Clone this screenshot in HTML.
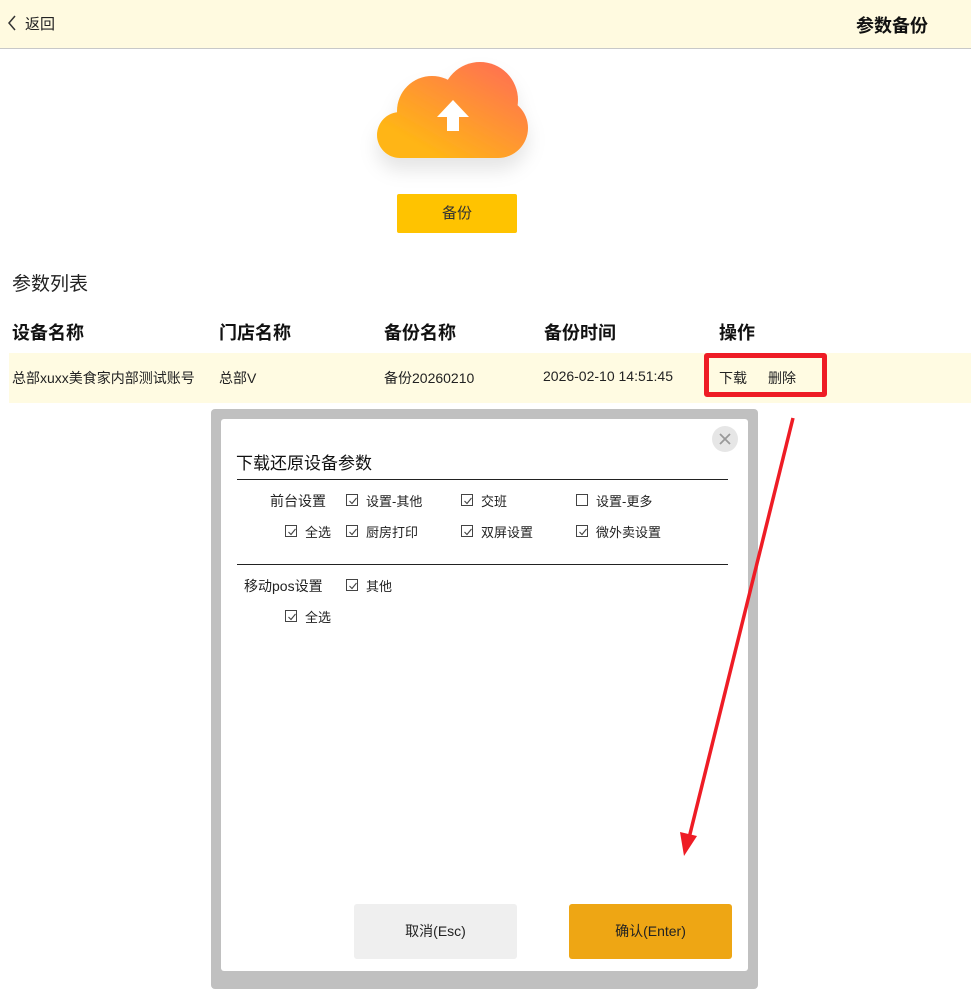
<!DOCTYPE html>
<html><head><meta charset="utf-8"><style>
*{margin:0;padding:0;box-sizing:border-box}
body{width:971px;height:980px;position:relative;overflow:hidden;background:#fff;font-family:"Liberation Sans","Noto Sans CJK SC",sans-serif;color:#222}
.a{position:absolute;white-space:nowrap}
.cb{position:absolute;width:12px;height:12px;border:1px solid #444;background:#fff}
.cb svg{position:absolute;left:1px;top:1px}
.t13{font-size:13px}
</style></head><body>
<div class="a" style="left:0;top:0;width:971px;height:49px;background:#fffae0;border-bottom:1px solid #c8c8c8"></div>
<svg class="a" style="left:6px;top:14px" width="12" height="18"><path d="M9 2 L3 9 L9 16" stroke="#333" stroke-width="1.5" fill="none"/></svg>
<div class="a" style="left:25px;top:13px;font-size:15px">返回</div>
<div class="a" style="left:856px;top:12px;font-size:18px;font-weight:bold;color:#111">参数备份</div>

<svg class="a" style="left:0;top:0" width="600" height="200">
<defs><linearGradient id="g" gradientUnits="userSpaceOnUse" x1="495" y1="62" x2="440" y2="158"><stop offset="0" stop-color="#ff7350"/><stop offset="1" stop-color="#ffb516"/></linearGradient>
<filter id="f" x="-30%" y="-30%" width="160%" height="180%"><feDropShadow dx="0" dy="12" stdDeviation="9" flood-color="#000" flood-opacity="0.1"/></filter></defs>
<g filter="url(#f)" fill="url(#g)">
<circle cx="400" cy="135" r="23"/>
<circle cx="432" cy="111" r="35"/>
<circle cx="480" cy="100" r="38"/>
<circle cx="498" cy="128" r="30"/>
<rect x="400" y="110" width="98" height="48"/>
</g>
<path d="M453 100 L437 117 L447 117 L447 131 L459 131 L459 117 L469 117 Z" fill="#fff"/>
</svg>
<div class="a" style="left:397px;top:194px;width:120px;height:39px;background:#ffc300;border-radius:2px;font-size:15px;text-align:center;line-height:39px;color:#333">备份</div>

<div class="a" style="left:12px;top:269px;font-size:19px">参数列表</div>
<div class="a" style="top:319px;left:12px;font-size:18px;font-weight:bold;color:#111">设备名称</div>
<div class="a" style="top:319px;left:219px;font-size:18px;font-weight:bold;color:#111">门店名称</div>
<div class="a" style="top:319px;left:384px;font-size:18px;font-weight:bold;color:#111">备份名称</div>
<div class="a" style="top:319px;left:544px;font-size:18px;font-weight:bold;color:#111">备份时间</div>
<div class="a" style="top:319px;left:719px;font-size:18px;font-weight:bold;color:#111">操作</div>
<div class="a" style="left:9px;top:353px;width:962px;height:50px;background:#fffbe2"></div>
<div class="a" style="top:368px;left:12px;font-size:14px">总部xuxx美食家内部测试账号</div>
<div class="a" style="top:368px;left:219px;font-size:14px">总部V</div>
<div class="a" style="top:368px;left:384px;font-size:14px">备份20260210</div>
<div class="a" style="top:368px;left:543px;font-size:14px">2026-02-10 14:51:45</div>
<div class="a" style="left:704px;top:353px;width:123px;height:44px;border:5px solid #ee1c25;border-radius:3px"></div>
<div class="a" style="top:368px;left:719px;font-size:14px">下载</div>
<div class="a" style="top:368px;left:768px;font-size:14px">删除</div>

<div class="a" style="left:211px;top:409px;width:547px;height:580px;background:#c0c0c0;border-radius:4px"></div>
<div class="a" style="left:221px;top:419px;width:527px;height:552px;background:#fff;border-radius:3px"></div>
<div class="a" style="left:712px;top:426px;width:26px;height:26px;border-radius:50%;background:#e6e6e6"></div>
<svg class="a" style="left:712px;top:426px" width="26" height="26"><path d="M8 8 L18 18 M18 8 L8 18" stroke="#999" stroke-width="1.8"/></svg>
<div class="a" style="left:236px;top:449px;font-size:17px;color:#111">下载还原设备参数</div>
<div class="a" style="left:237px;top:479px;width:491px;height:1px;background:#222"></div>
<div class="a" style="left:237px;top:564px;width:491px;height:1px;background:#222"></div>

<div class="a t13" style="left:270px;top:491px;font-size:14px">前台设置</div>
<div class="a t13" style="left:244px;top:576px;font-size:14px">移动pos设置</div>

<div class="cb" style="left:346px;top:494px"><svg width="10" height="10"><path d="M1.5 5 L4 7.5 L8.5 2" stroke="#444" fill="none" stroke-width="1.1"/></svg></div><div class="a t13" style="left:366px;top:491px">设置-其他</div>
<div class="cb" style="left:461px;top:494px"><svg width="10" height="10"><path d="M1.5 5 L4 7.5 L8.5 2" stroke="#444" fill="none" stroke-width="1.1"/></svg></div><div class="a t13" style="left:481px;top:491px">交班</div>
<div class="cb" style="left:576px;top:494px"></div><div class="a t13" style="left:596px;top:491px">设置-更多</div>

<div class="cb" style="left:285px;top:525px"><svg width="10" height="10"><path d="M1.5 5 L4 7.5 L8.5 2" stroke="#444" fill="none" stroke-width="1.1"/></svg></div><div class="a t13" style="left:305px;top:522px">全选</div>
<div class="cb" style="left:346px;top:525px"><svg width="10" height="10"><path d="M1.5 5 L4 7.5 L8.5 2" stroke="#444" fill="none" stroke-width="1.1"/></svg></div><div class="a t13" style="left:366px;top:522px">厨房打印</div>
<div class="cb" style="left:461px;top:525px"><svg width="10" height="10"><path d="M1.5 5 L4 7.5 L8.5 2" stroke="#444" fill="none" stroke-width="1.1"/></svg></div><div class="a t13" style="left:481px;top:522px">双屏设置</div>
<div class="cb" style="left:576px;top:525px"><svg width="10" height="10"><path d="M1.5 5 L4 7.5 L8.5 2" stroke="#444" fill="none" stroke-width="1.1"/></svg></div><div class="a t13" style="left:596px;top:522px">微外卖设置</div>

<div class="cb" style="left:346px;top:579px"><svg width="10" height="10"><path d="M1.5 5 L4 7.5 L8.5 2" stroke="#444" fill="none" stroke-width="1.1"/></svg></div><div class="a t13" style="left:366px;top:576px">其他</div>
<div class="cb" style="left:285px;top:610px"><svg width="10" height="10"><path d="M1.5 5 L4 7.5 L8.5 2" stroke="#444" fill="none" stroke-width="1.1"/></svg></div><div class="a t13" style="left:305px;top:607px">全选</div>

<div class="a" style="left:354px;top:904px;width:163px;height:55px;background:#efefef;border-radius:3px;font-size:14px;text-align:center;line-height:55px">取消(Esc)</div>
<div class="a" style="left:569px;top:904px;width:163px;height:55px;background:#eea614;border-radius:3px;font-size:14px;text-align:center;line-height:55px">确认(Enter)</div>

<svg class="a" style="left:0;top:0" width="971" height="980"><path d="M793 418 L689 838" stroke="#ee1c25" stroke-width="3.5" fill="none"/><path d="M680 832 L684 856 L697 836 Z" fill="#ee1c25"/></svg>
</body></html>
